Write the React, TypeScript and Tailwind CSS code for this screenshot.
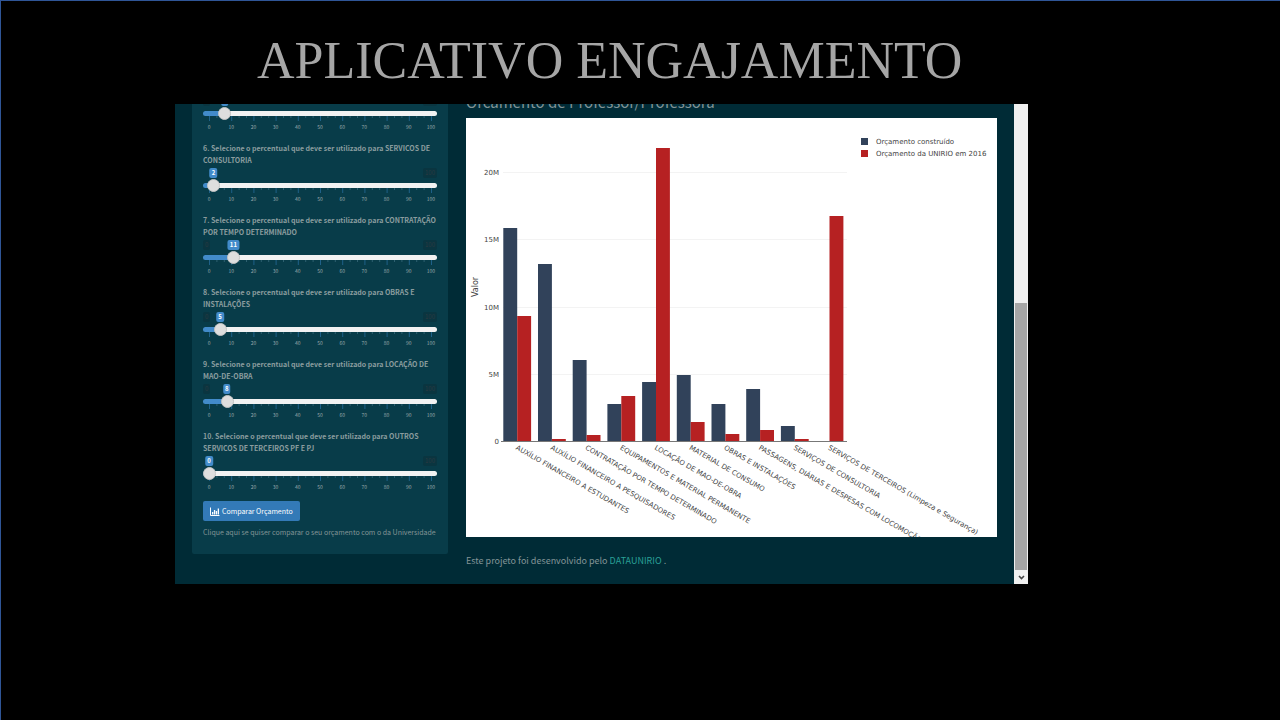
import { useState } from "react";

type SliderItem = { id: string; label?: string; initial: number };

const sliders: SliderItem[] = [
  { id: "q5", initial: 7 },
  { id: "q6", label: "6. Selecione o percentual que deve ser utilizado para SERVICOS DE CONSULTORIA", initial: 2 },
  { id: "q7", label: "7. Selecione o percentual que deve ser utilizado para CONTRATAÇÃO POR TEMPO DETERMINADO", initial: 11 },
  { id: "q8", label: "8. Selecione o percentual que deve ser utilizado para OBRAS E INSTALAÇÕES", initial: 5 },
  { id: "q9", label: "9. Selecione o percentual que deve ser utilizado para LOCAÇÃO DE MAO-DE-OBRA", initial: 8 },
  { id: "q10", label: "10. Selecione o percentual que deve ser utilizado para OUTROS SERVICOS DE TERCEIROS PF E PJ", initial: 0 },
];

const tens = [0, 10, 20, 30, 40, 50, 60, 70, 80, 90, 100];

function Ruler() {
  const ticks = Array.from({ length: 31 }, (_, i) => i);
  return (
    <svg className="block h-[5px] w-full" viewBox="0 0 234 5" preserveAspectRatio="none" aria-hidden="true">
      {ticks.map((i) => (
        <rect key={i} x={6 + i * 7.4} y="0" width="1" height={i % 3 === 0 ? 5 : 2} fill={i % 3 === 0 ? "#1f6189" : "#2d6070"} />
      ))}
    </svg>
  );
}

function PercentSlider({ item }: { item: SliderItem }) {
  const [value, setValue] = useState(item.initial);
  const position = `calc(6px + (100% - 12px) * ${value / 100})`;
  return (
    <div className="mb-[11px]">
      {item.label ? (
        <label htmlFor={item.id} className="block h-6 text-[7px] leading-[12px] font-bold text-[#8b9c9f]">
          {item.label}
        </label>
      ) : null}
      <div className="relative mt-0.5 flex h-[11px] items-start justify-between text-[6px] leading-[10px] text-[#2c3a40]">
        <span className={value > 4 ? "rounded-xs bg-[#0a3540] px-0.5" : "invisible"}>0</span>
        <span className="rounded-xs bg-[#0a3540] px-0.5">100</span>
        <output
          htmlFor={item.id}
          className="absolute top-0 -translate-x-1/2 rounded-xs bg-[#428bca] px-0.5 font-bold text-white"
          style={{ left: position }}
        >
          {value}
        </output>
      </div>
      <input
        id={item.id}
        type="range"
        min={0}
        max={100}
        value={value}
        aria-label={item.label ?? "Percentual"}
        onChange={(e) => setValue(Number(e.target.value))}
        className="relative z-10 mt-1 block h-[5px] w-full cursor-pointer appearance-none rounded-full [&::-webkit-slider-runnable-track]:h-[5px] [&::-webkit-slider-thumb]:-mt-1 [&::-webkit-slider-thumb]:size-[13px] [&::-webkit-slider-thumb]:appearance-none [&::-webkit-slider-thumb]:rounded-full [&::-webkit-slider-thumb]:border [&::-webkit-slider-thumb]:border-[#c4c4c4] [&::-webkit-slider-thumb]:bg-[#dedede]"
        style={{ background: `linear-gradient(to right, #428bca ${position}, #f2f2f2 ${position})` }}
      />
      <Ruler />
      <div className="-mx-[5px] grid h-2.5 grid-cols-11 text-center text-[5px] leading-[11px] text-[#9aa9ab]">
        {tens.map((n) => (
          <span key={n}>{n}</span>
        ))}
      </div>
    </div>
  );
}

const groups = [
  { name: "AUXÍLIO FINANCEIRO A ESTUDANTES", built: 213, real: 125 },
  { name: "AUXÍLIO FINANCEIRO A PESQUISADORES", built: 177, real: 2 },
  { name: "CONTRATAÇÃO POR TEMPO DETERMINADO", built: 81, real: 6 },
  { name: "EQUIPAMENTOS E MATERIAL PERMANENTE", built: 37, real: 45 },
  { name: "LOCAÇÃO DE MAO-DE-OBRA", built: 59, real: 293 },
  { name: "MATERIAL DE CONSUMO", built: 66, real: 19 },
  { name: "OBRAS E INSTALAÇÕES", built: 37, real: 7 },
  { name: "PASSAGENS, DIÁRIAS E DESPESAS COM LOCOMOÇÃO", built: 52, real: 11 },
  { name: "SERVIÇOS DE CONSULTORIA", built: 15, real: 2 },
  { name: "SERVIÇOS DE TERCEIROS (Limpeza e Segurança)", built: 0, real: 225 },
];

const levels = [
  { label: "20M", y: 54 },
  { label: "15M", y: 121 },
  { label: "10M", y: 189 },
  { label: "5M", y: 256 },
  { label: "0", y: 323 },
];

function BudgetChart() {
  return (
    <svg
      className="block w-full bg-white font-['DejaVu_Sans',sans-serif] text-[7px]"
      viewBox="0 0 531 419"
      role="img"
      aria-label="Orçamento construído e orçamento da UNIRIO em 2016"
    >
      {levels.map((l) => (
        <g key={l.label}>
          <rect x="37" y={l.y} width="344" height="1" fill="#f3f3f3" />
          <text x="33" y={l.y + 3} textAnchor="end" fill="#444">
            {l.label}
          </text>
        </g>
      ))}
      {groups.map((g, i) => {
        const x = 37.3 + i * 34.7;
        return (
          <g key={g.name}>
            <rect x={x} y={323 - g.built} width="13.9" height={g.built} fill="#31425a" />
            <rect x={x + 13.9} y={323 - g.real} width="13.9" height={g.real} fill="#b62122" />
            <text transform={`translate(${x + 12} 331) rotate(30)`} fill="#444">
              {g.name}
            </text>
          </g>
        );
      })}
      <rect x="35" y="323" width="346" height="1" fill="#777" />
      <text transform="translate(12 169) rotate(-90)" textAnchor="middle" fill="#444" fontSize="8">
        Valor
      </text>
      <rect x="395" y="20" width="7" height="7" fill="#31425a" />
      <text x="410" y="26" fill="#444">
        Orçamento construído
      </text>
      <rect x="395" y="32" width="7" height="7" fill="#b62122" />
      <text x="410" y="38" fill="#444">
        Orçamento da UNIRIO em 2016
      </text>
    </svg>
  );
}

function ScrollColumn() {
  return (
    <div className="flex w-3.5 shrink-0 flex-col bg-[#f0f0f0] px-px" aria-hidden="true">
      <div className="mt-auto h-[267px] bg-[#a6a6a6]" />
      <div className="flex h-3.5 items-center justify-center">
        <svg width="7" height="5" viewBox="0 0 7 5">
          <path d="M1 1 L3.5 3.5 L6 1" fill="none" stroke="#444" strokeWidth="1.6" />
        </svg>
      </div>
    </div>
  );
}

export default function App() {
  return (
    <div className="min-h-screen border-t border-l border-[#2f5597] bg-black pl-[174px]">
      <div className="max-w-[853px]">
        <h1 className="h-[103px] pt-[26px] pl-[82px] font-['Liberation_Serif',serif] text-[52px] leading-[68px] whitespace-nowrap text-[#a6a6a6]">
          APLICATIVO ENGAJAMENTO
        </h1>
        <div className="flex h-[480px] overflow-hidden bg-[#002b36] font-['Noto_Sans_CJK_SC',sans-serif] text-[#839496]">
          <div className="flex min-w-0 flex-1 items-end gap-[18px] px-[17px]">
            <aside className="mb-[30px] w-[256px] shrink-0 rounded-b-xs bg-[#083c49] px-[11px] pt-6">
              {sliders.map((s) => (
                <PercentSlider key={s.id} item={s} />
              ))}
              <button
                type="button"
                className="-mt-px flex h-5 items-center gap-0.5 rounded-xs bg-[#337ab7] px-[7px] text-[7px] leading-[10px] whitespace-nowrap text-white"
              >
                <svg width="10" height="9" viewBox="0 0 10 9" aria-hidden="true">
                  <path d="M0.5 0.5V8.5H9.5" fill="none" stroke="#fff" />
                  <path d="M2 5h1.3v2.6H2zM3.9 3h1.3v4.6H3.9zM5.8 4h1.3v3.6H5.8zM7.7 1.5H9v6.1H7.7z" fill="#fff" />
                </svg>
                Comparar Orçamento
              </button>
              <p className="mt-[5px] mb-4 text-[7px] leading-[12px] whitespace-nowrap">
                Clique aqui se quiser comparar o seu orçamento com o da Universidade
              </p>
            </aside>
            <main className="min-w-0 flex-1">
              <h2 className="text-[15px] leading-[20px] whitespace-nowrap">Orcamento de Professor/Professora</h2>
              <div className="mt-1.5">
                <BudgetChart />
              </div>
              <p className="mt-4 mb-[15px] text-[9px] leading-4">
                Este projeto foi desenvolvido pelo{" "}
                <a href="#dataunirio" className="text-[#2aa198]">
                  DATAUNIRIO
                </a>{" "}
                .
              </p>
            </main>
          </div>
          <ScrollColumn />
        </div>
      </div>
    </div>
  );
}
